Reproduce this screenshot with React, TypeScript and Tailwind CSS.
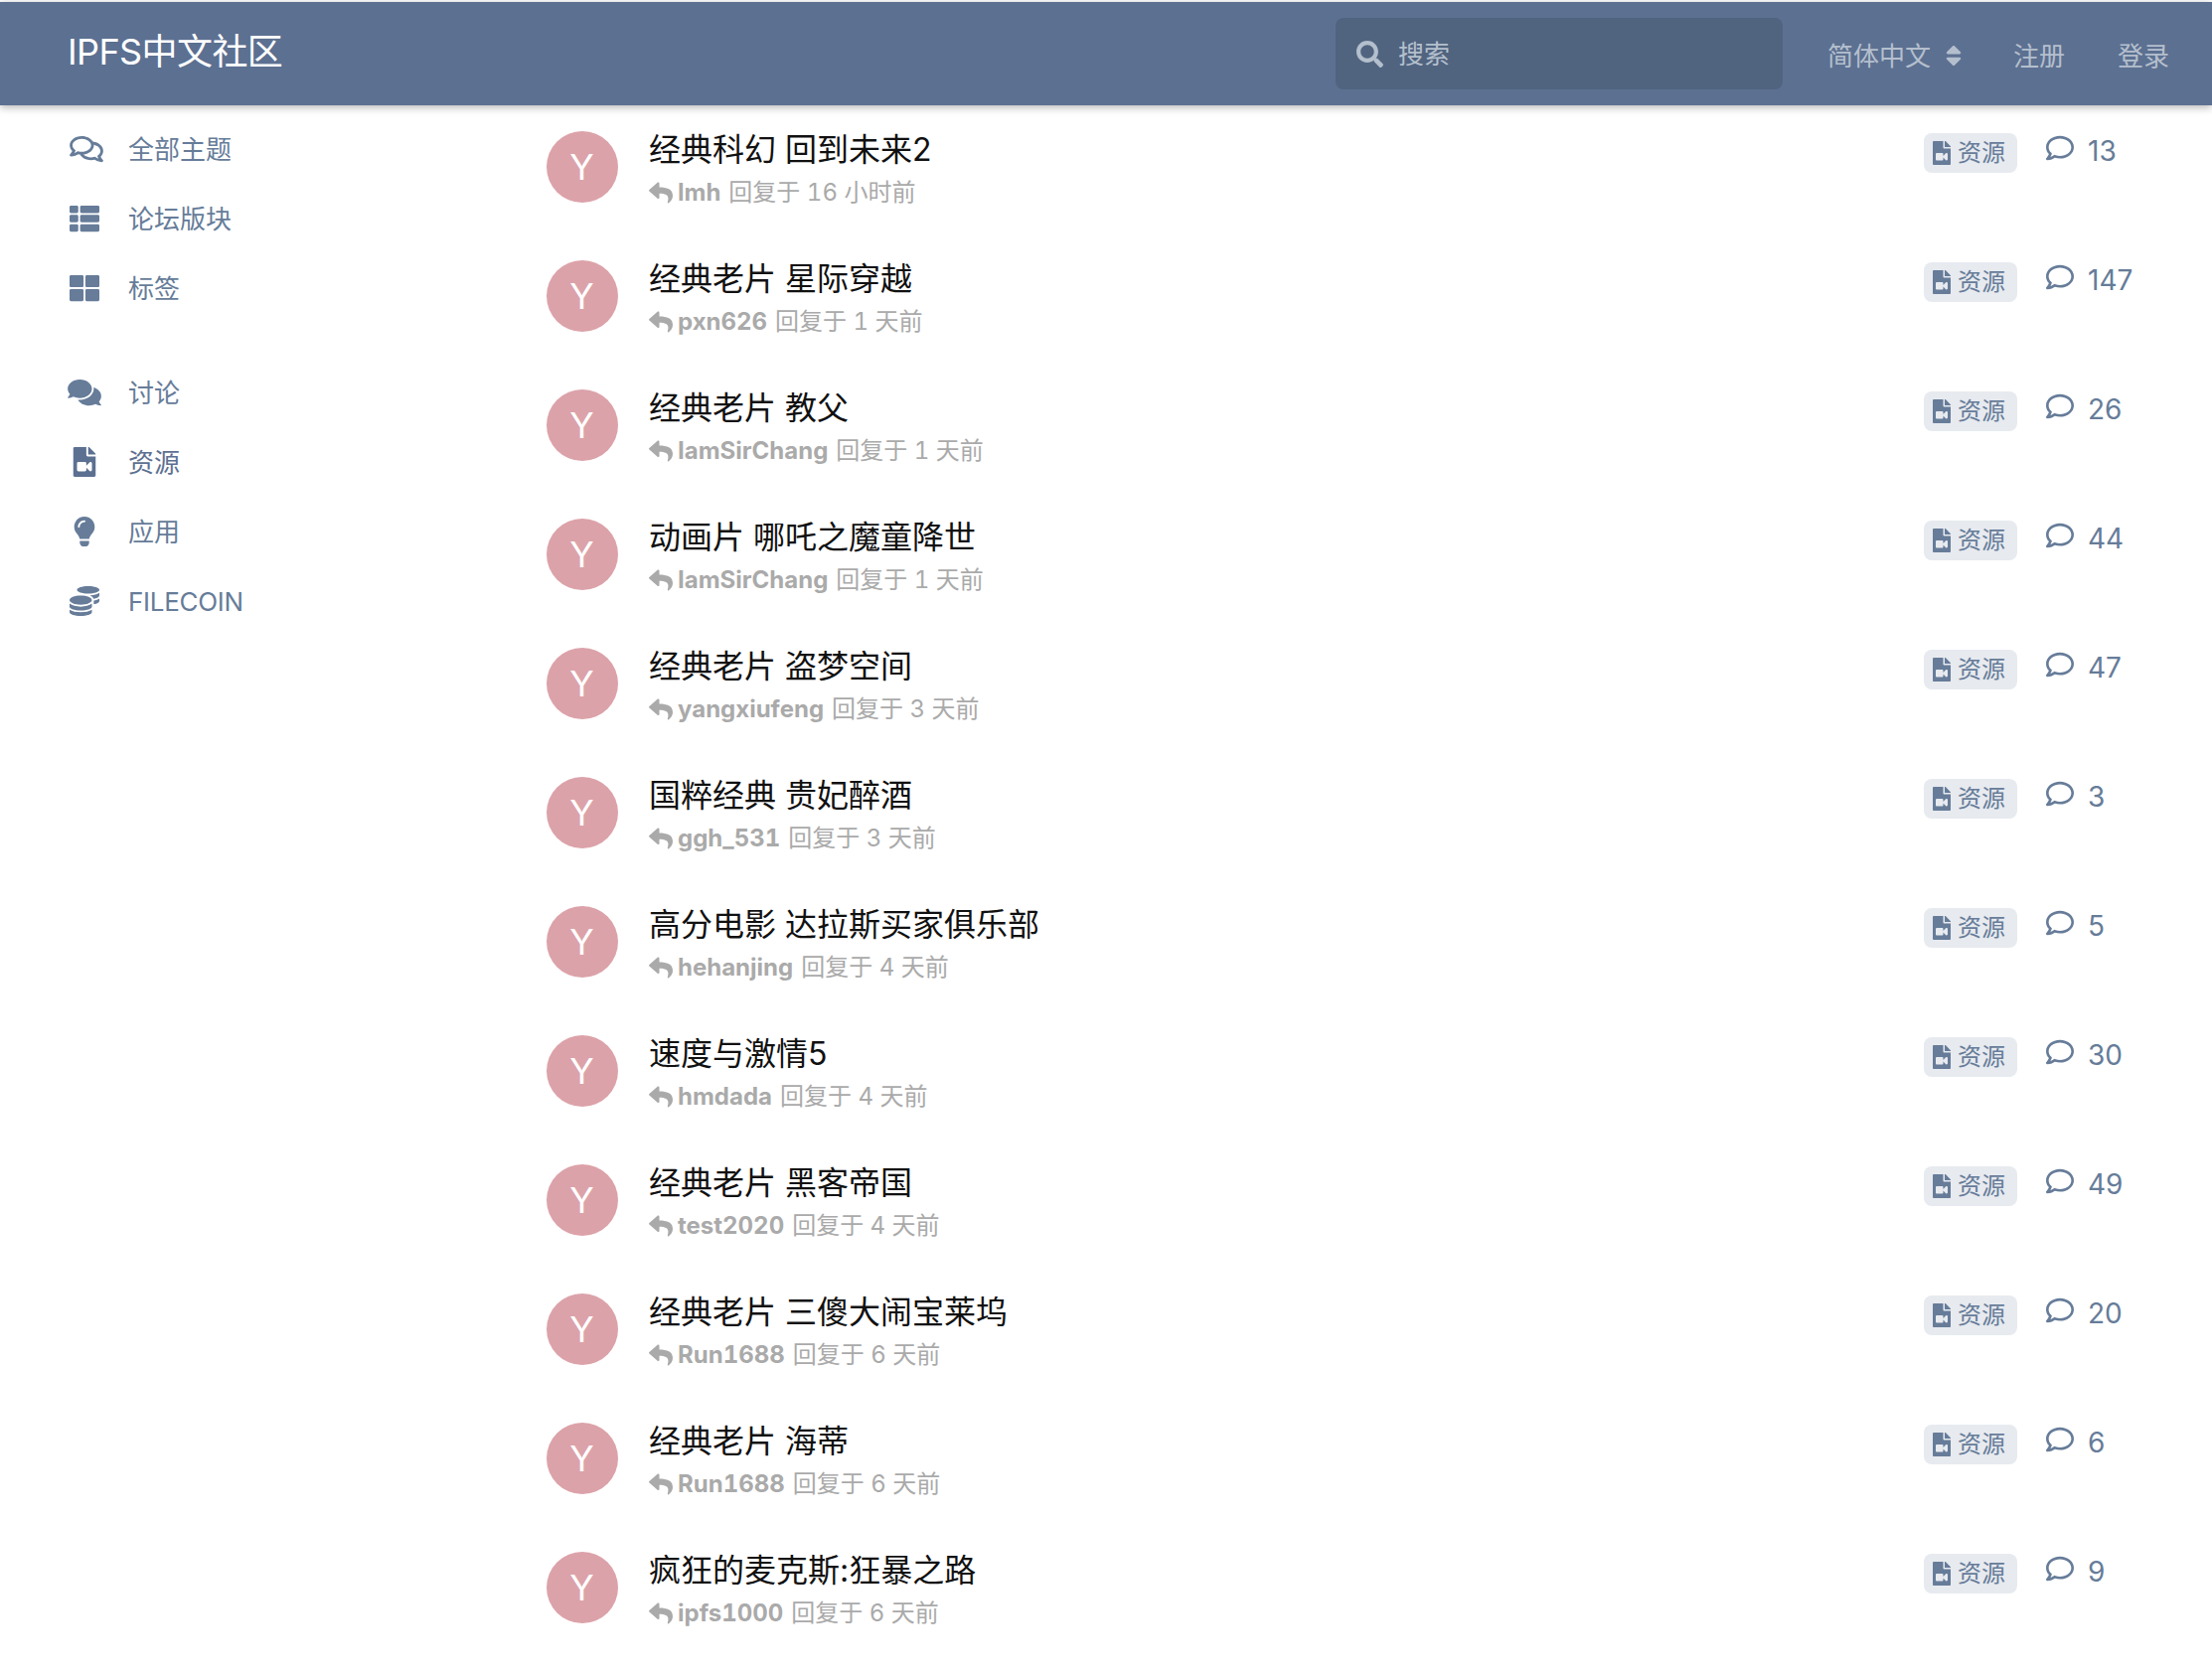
import React from 'react';
import {
  FaRegComments,
  FaThList,
  FaThLarge,
  FaComments,
  FaFileVideo,
  FaLightbulb,
  FaCoins,
  FaRegComment,
  FaReply,
  FaSearch,
  FaSort,
} from 'react-icons/fa';

const topNav = [
  { label: '全部主题', Icon: FaRegComments, cls: 'w-[34px] h-[30px]' },
  { label: '论坛版块', Icon: FaThList, cls: 'w-[30px] h-[30px]' },
  { label: '标签', Icon: FaThLarge, cls: 'w-[30px] h-[30px]' },
];

const tagNav = [
  { label: '讨论', Icon: FaComments, active: false },
  { label: '资源', Icon: FaFileVideo, active: true },
  { label: '应用', Icon: FaLightbulb, active: false },
  { label: 'FILECOIN', Icon: FaCoins, active: false },
];

const topics = [
  { title: '经典科幻 回到未来2', user: 'lmh', time: '16 小时前', count: 13 },
  { title: '经典老片 星际穿越', user: 'pxn626', time: '1 天前', count: 147 },
  { title: '经典老片 教父', user: 'IamSirChang', time: '1 天前', count: 26 },
  { title: '动画片 哪吒之魔童降世', user: 'IamSirChang', time: '1 天前', count: 44 },
  { title: '经典老片 盗梦空间', user: 'yangxiufeng', time: '3 天前', count: 47 },
  { title: '国粹经典 贵妃醉酒', user: 'ggh_531', time: '3 天前', count: 3 },
  { title: '高分电影 达拉斯买家俱乐部', user: 'hehanjing', time: '4 天前', count: 5 },
  { title: '速度与激情5', user: 'hmdada', time: '4 天前', count: 30 },
  { title: '经典老片 黑客帝国', user: 'test2020', time: '4 天前', count: 49 },
  { title: '经典老片 三傻大闹宝莱坞', user: 'Run1688', time: '6 天前', count: 20 },
  { title: '经典老片 海蒂', user: 'Run1688', time: '6 天前', count: 6 },
  { title: '疯狂的麦克斯:狂暴之路', user: 'ipfs1000', time: '6 天前', count: 9 },
];

function Header() {
  return (
    <header className="relative z-10 mt-[2px] flex h-[104px] items-center bg-[#5c7091] pl-[68px] pr-[43px] shadow-[0_2px_8px_rgba(0,0,0,0.3)]">
      <div className="pb-[5px] text-[36px] leading-none tracking-[-0.6px] text-white">IPFS中文社区</div>
      <div className="ml-auto flex h-[72px] w-[450px] items-center rounded-[8px] bg-[#50647f] pl-[21px] text-[26px] text-[#b4bfcd]">
        <FaSearch className="h-[27px] w-[27px]" />
        <span className="ml-[15px]">搜索</span>
      </div>
      <div className="ml-[45px] flex items-center pt-[4px] text-[26px] text-[#b4bfcd]">
        <span>简体中文</span>
        <FaSort className="ml-[14px] h-[26px] w-[18px]" />
      </div>
      <span className="ml-[51px] pt-[4px] text-[26px] text-[#b4bfcd]">注册</span>
      <span className="ml-[53px] pt-[4px] text-[26px] text-[#b4bfcd]">登录</span>
    </header>
  );
}

function Sidebar() {
  return (
    <aside className="w-[550px] shrink-0 pl-[70px] pt-[9px]">
      <div>
        {topNav.map(({ label, Icon, cls }) => (
          <div key={label} className="flex h-[70px] items-center text-[26px] text-[#667c99]">
            <span className="flex w-[59px] shrink-0">
              <Icon className={cls} />
            </span>
            {label}
          </div>
        ))}
      </div>
      <div className="mt-[35px]">
        {tagNav.map(({ label, Icon, active }) => (
          <div
            key={label}
            className={active ? 'flex h-[70px] items-center text-[26px] text-[#5c7091]' : 'flex h-[70px] items-center text-[26px] text-[#667c99]'}
          >
            <span className="ml-[-2px] flex w-[61px] shrink-0">
              <Icon className="h-[30px] w-[34px]" />
            </span>
            <span className={label === 'FILECOIN' ? 'tracking-[-0.3px]' : ''}>{label}</span>
          </div>
        ))}
      </div>
    </aside>
  );
}

function TopicRow({ title, user, time, count }: { title: string; user: string; time: string; count: number }) {
  return (
    <div className="flex h-[130px] items-start pt-[26px]">
      <div className="flex h-[72px] w-[72px] shrink-0 items-center justify-center rounded-full bg-[#dca2a9] pr-[1px] text-[36px] text-white">
        Y
      </div>
      <div className="ml-[31px] min-w-0 flex-1">
        <div className="mt-[-4px] text-[32px] leading-[46px] text-[#111]">{title}</div>
        <div className="mt-[2px] flex items-center text-[24px] leading-[36px] tabular-nums text-[#aaa]">
          <FaReply className="mr-[5px] h-[24px] w-[24px]" />
          <span className="font-bold">{user}</span>
          <span className="ml-[8px]">回复于 {time}</span>
        </div>
      </div>
      <div className="mt-[2px] flex h-[40px] w-[94px] shrink-0 items-center rounded-[8px] bg-[#e7eaef] pl-[9px] text-[24px] text-[#667c99]">
        <FaFileVideo className="h-[24px] w-[18px]" />
        <span className="ml-[7px]">资源</span>
      </div>
      <div className="ml-[29px] mt-[1px] flex w-[167px] shrink-0 items-center text-[28px] leading-[38px] text-[#667c99]">
        <FaRegComment className="mt-[-6px] h-[28px] w-[28px]" />
        <span className="ml-[14px]">{count}</span>
      </div>
    </div>
  );
}

export default function App() {
  return (
    <div className="min-h-[1682px] bg-white font-['Inter','Noto_Sans_CJK_SC',sans-serif]">
      <Header />
      <div className="flex">
        <Sidebar />
        <main className="flex-1">
          {topics.map((t) => (
            <TopicRow key={t.title} {...t} />
          ))}
        </main>
      </div>
    </div>
  );
}
